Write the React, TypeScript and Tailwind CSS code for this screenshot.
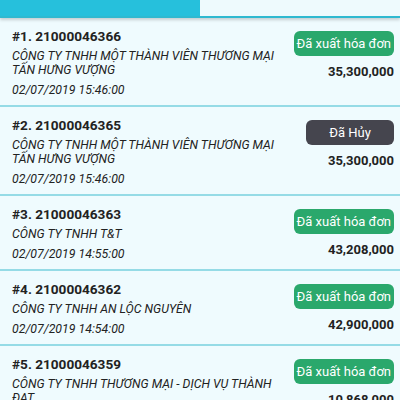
import React from 'react'

// ========================================
// DATA
// ========================================

type Status = 'issued' | 'cancelled'

interface Invoice {
  no: number
  code: string
  company: string
  date: string
  amount: string
  status: Status
}

const invoices: Invoice[] = [
  {
    no: 1,
    code: '21000046366',
    company: 'CÔNG TY TNHH MỘT THÀNH VIÊN THƯƠNG MẠI TẤN HƯNG VƯỢNG',
    date: '02/07/2019 15:46:00',
    amount: '35,300,000',
    status: 'issued',
  },
  {
    no: 2,
    code: '21000046365',
    company: 'CÔNG TY TNHH MỘT THÀNH VIÊN THƯƠNG MẠI TẤN HƯNG VƯỢNG',
    date: '02/07/2019 15:46:00',
    amount: '35,300,000',
    status: 'cancelled',
  },
  {
    no: 3,
    code: '21000046363',
    company: 'CÔNG TY TNHH T&T',
    date: '02/07/2019 14:55:00',
    amount: '43,208,000',
    status: 'issued',
  },
  {
    no: 4,
    code: '21000046362',
    company: 'CÔNG TY TNHH AN LỘC NGUYÊN',
    date: '02/07/2019 14:54:00',
    amount: '42,900,000',
    status: 'issued',
  },
  {
    no: 5,
    code: '21000046359',
    company: 'CÔNG TY TNHH THƯƠNG MẠI - DỊCH VỤ THÀNH ĐẠT',
    date: '02/07/2019 14:50:00',
    amount: '10,868,000',
    status: 'issued',
  },
]

// ========================================
// COMPONENTS
// ========================================

function StatusBadge({ status }: { status: Status }) {
  const cancelled = status === 'cancelled'
  return (
    <div
      className={
        'h-[25px] min-w-[88px] px-[3px] flex items-center justify-center rounded-[6px] text-white text-[13px] whitespace-nowrap ' +
        (cancelled ? 'bg-[#45454e]' : 'bg-[#2aa86c]')
      }
    >
      {cancelled ? 'Đã Hủy' : 'Đã xuất hóa đơn'}
    </div>
  )
}

function InvoiceRow({ item }: { item: Invoice }) {
  return (
    <div className="flex justify-between pl-3 pr-[6px] pt-[9px] pb-[8px] border-b-2 border-[#95dbe6]">
      {/* Left */}
      <div className="flex flex-col w-[272px] shrink-0">
        <div className="text-[13.6px] leading-[18px] font-bold text-[#222]">
          #{item.no}. {item.code}
        </div>
        <div className="mt-[4px] text-[12.3px] leading-[14px] italic text-[#222]">{item.company}</div>
        <div className="mt-[6px] text-[12.3px] leading-[14px] italic text-[#222]">{item.date}</div>
      </div>

      {/* Right */}
      <div className="flex flex-col items-end shrink-0 pt-[4px]">
        <StatusBadge status={item.status} />
        <div className="mt-[8px] text-[13px] leading-[16px] font-bold text-[#222]">{item.amount}</div>
      </div>
    </div>
  )
}

export default function App() {
  return (
    <div className="w-[400px] h-[400px] overflow-hidden bg-[#effbfe] font-['Roboto',sans-serif]">
      {/* Tabs */}
      <div className="relative z-10 flex h-[18px] border-b-2 border-[#2fb9d0] shadow-[0_2px_3px_rgba(0,0,0,0.18)]">
        <div className="w-1/2 bg-[#26c0dc]" />
        <div className="w-1/2 bg-[#eefafd]" />
      </div>

      {/* List */}
      <div>
        {invoices.map((item) => (
          <InvoiceRow key={item.no} item={item} />
        ))}
      </div>
    </div>
  )
}
